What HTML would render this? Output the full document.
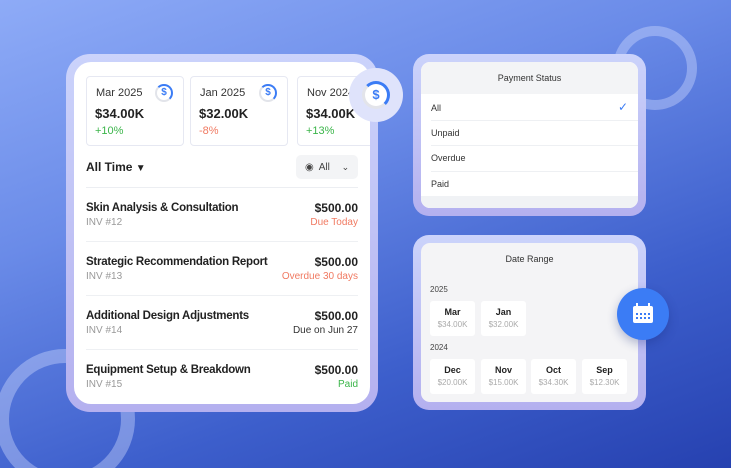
<!DOCTYPE html>
<html style="width:731px;height:468px;overflow:hidden"><head><meta charset="utf-8"><style>
*{margin:0;padding:0;box-sizing:border-box}
body{width:731px;height:468px;overflow:hidden;position:relative;font-family:"Liberation Sans",sans-serif;color:#222;
background:linear-gradient(160deg,#8eabf7 0%,#6a8be8 35%,#3d5fcc 70%,#2641b0 100%)}
.a{position:absolute}
.ring{position:absolute;border-radius:50%;border-style:solid;border-color:rgba(210,220,255,.4)}
.frame{position:absolute;border-radius:24px;background:linear-gradient(180deg,#cbd3fb,#b4b0ef)}
.inner{position:absolute;border-radius:17px;background:#fff;overflow:hidden}
.stat{position:absolute;top:14px;width:98px;height:70px;border:1px solid #e6e8f2;border-radius:4px;background:#fff}
.stat .m{position:absolute;left:9px;top:10px;font-size:11px;color:#333}
.stat .v{position:absolute;left:8px;top:29px;font-size:13px;font-weight:bold}
.stat .p{position:absolute;left:8px;top:48px;font-size:11px}
.ic{position:absolute;right:10px;top:7px;width:18px;height:18px;border-radius:50%;border:2px solid #e2e4ea;border-top-color:#3b7cf5;border-right-color:#3b7cf5;font-size:10px;font-weight:bold;color:#3b7cf5;text-align:center;line-height:14px}
.row{position:absolute;left:12px;width:272px;height:54px;border-top:1px solid #eef0f3}
.row .t{position:absolute;left:0;top:14px;font-size:11.5px;font-weight:bold;color:#222;letter-spacing:-0.25px}
.row .s{position:absolute;left:0;top:29px;font-size:10px;color:#999}
.row .r{position:absolute;right:0;top:13px;font-size:12px;font-weight:bold}
.row .q{position:absolute;right:0;top:29px;font-size:10px}
.opt{position:absolute;left:10px;font-size:9px;color:#333}
.chip{position:absolute;width:45px;height:35px;background:#fff;border-radius:3px;text-align:center}
.chip b{display:block;font-size:9px;margin-top:6px;color:#222}
.chip span{display:block;font-size:8px;color:#aaa;margin-top:3px}
</style></head><body>
<div class="ring" style="left:-5px;top:349px;width:140px;height:140px;border-width:14px"></div>
<div class="ring" style="left:613px;top:26px;width:84px;height:84px;border-width:10px"></div>

<div class="frame" style="left:66px;top:54px;width:312px;height:358px"></div>
<div class="inner" style="left:74px;top:62px;width:296px;height:342px">
  <div class="stat" style="left:12px"><div class="m">Mar 2025</div><div class="ic">$</div><div class="v">$34.00K</div><div class="p" style="color:#3bb54a">+10%</div></div>
  <div class="stat" style="left:116px"><div class="m">Jan 2025</div><div class="ic">$</div><div class="v">$32.00K</div><div class="p" style="color:#f07a62">-8%</div></div>
  <div class="stat" style="left:223px"><div class="m">Nov 2024</div><div class="v">$34.00K</div><div class="p" style="color:#3bb54a">+13%</div></div>
  <div class="a" style="left:12px;top:98px;font-size:12px;font-weight:bold">All Time <span style="font-size:10px">&#9660;</span></div>
  <div class="a" style="left:222px;top:93px;width:62px;height:24px;background:#f3f4f6;border-radius:5px;font-size:10px;color:#444;line-height:24px;padding-left:9px">&#9673;&nbsp; All <span style="margin-left:9px;font-size:9px">&#8964;</span></div>
  <div class="row" style="top:125px;border-top-color:#eceef2"><div class="t">Skin Analysis &amp; Consultation</div><div class="s">INV #12</div><div class="r">$500.00</div><div class="q" style="color:#f07a62">Due Today</div></div>
  <div class="row" style="top:179px"><div class="t">Strategic Recommendation Report</div><div class="s">INV #13</div><div class="r">$500.00</div><div class="q" style="color:#f07a62">Overdue 30 days</div></div>
  <div class="row" style="top:233px"><div class="t">Additional Design Adjustments</div><div class="s">INV #14</div><div class="r">$500.00</div><div class="q" style="color:#333">Due on Jun 27</div></div>
  <div class="row" style="top:287px"><div class="t">Equipment Setup &amp; Breakdown</div><div class="s">INV #15</div><div class="r">$500.00</div><div class="q" style="color:#3bb54a">Paid</div></div>
</div>
<div class="a" style="left:349px;top:68px;width:54px;height:54px;border-radius:50%;background:#dfe3fb"></div>
<div class="a" style="left:362px;top:81px;width:28px;height:28px;border-radius:50%;border:3px solid #e3e4ea;border-top-color:#3b7cf5;border-right-color:#3b7cf5;background:#fff;color:#3b7cf5;font-weight:bold;font-size:13px;text-align:center;line-height:22px">$</div>

<div class="frame" style="left:413px;top:54px;width:233px;height:162px;border-radius:16px"></div>
<div class="inner" style="left:421px;top:62px;width:217px;height:146px;border-radius:9px">
  <div class="a" style="left:0;top:0;width:217px;height:32px;background:#f3f4f6;text-align:center;line-height:32px;font-size:9px;color:#333">Payment Status</div>
  <div class="opt" style="top:41px">All</div><div class="a" style="right:10px;top:38px;color:#3b7cf5;font-size:12px">&#10003;</div>
  <div class="a" style="left:10px;right:0;top:58px;border-top:1px solid #eef0f3"></div>
  <div class="opt" style="top:66px">Unpaid</div>
  <div class="a" style="left:10px;right:0;top:83px;border-top:1px solid #eef0f3"></div>
  <div class="opt" style="top:91px">Overdue</div>
  <div class="a" style="left:10px;right:0;top:109px;border-top:1px solid #eef0f3"></div>
  <div class="opt" style="top:117px">Paid</div>
  <div class="a" style="left:0;top:134px;width:217px;height:12px;background:#f0f2f5"></div>
</div>

<div class="frame" style="left:413px;top:235px;width:233px;height:175px;border-radius:16px"></div>
<div class="inner" style="left:421px;top:243px;width:217px;height:159px;border-radius:9px;background:#f4f4f6">
  <div class="a" style="left:0;top:11px;width:217px;text-align:center;font-size:9px;color:#333">Date Range</div>
  <div class="a" style="left:9px;top:42px;font-size:8px;color:#444">2025</div>
  <div class="chip" style="left:9px;top:58px"><b>Mar</b><span>$34.00K</span></div>
  <div class="chip" style="left:60px;top:58px"><b>Jan</b><span>$32.00K</span></div>
  <div class="a" style="left:9px;top:100px;font-size:8px;color:#444">2024</div>
  <div class="chip" style="left:9px;top:116px"><b>Dec</b><span>$20.00K</span></div>
  <div class="chip" style="left:60px;top:116px"><b>Nov</b><span>$15.00K</span></div>
  <div class="chip" style="left:110px;top:116px"><b>Oct</b><span>$34.30K</span></div>
  <div class="chip" style="left:161px;top:116px"><b>Sep</b><span>$12.30K</span></div>
</div>
<div class="a" style="left:617px;top:288px;width:52px;height:52px;border-radius:50%;background:#3b7cf5;box-shadow:0 4px 10px rgba(20,40,120,.3)">
  <svg width="52" height="52" viewBox="0 0 52 52"><rect x="16" y="18" width="20" height="17" rx="2" fill="#fff"/><rect x="19" y="15" width="2" height="5" fill="#fff"/><rect x="31" y="15" width="2" height="5" fill="#fff"/>
  <g fill="#3b7cf5"><rect x="19" y="25" width="2" height="2"/><rect x="23" y="25" width="2" height="2"/><rect x="27" y="25" width="2" height="2"/><rect x="31" y="25" width="2" height="2"/><rect x="19" y="29" width="2" height="2"/><rect x="23" y="29" width="2" height="2"/><rect x="27" y="29" width="2" height="2"/><rect x="31" y="29" width="2" height="2"/></g></svg>
</div>
</body></html>
